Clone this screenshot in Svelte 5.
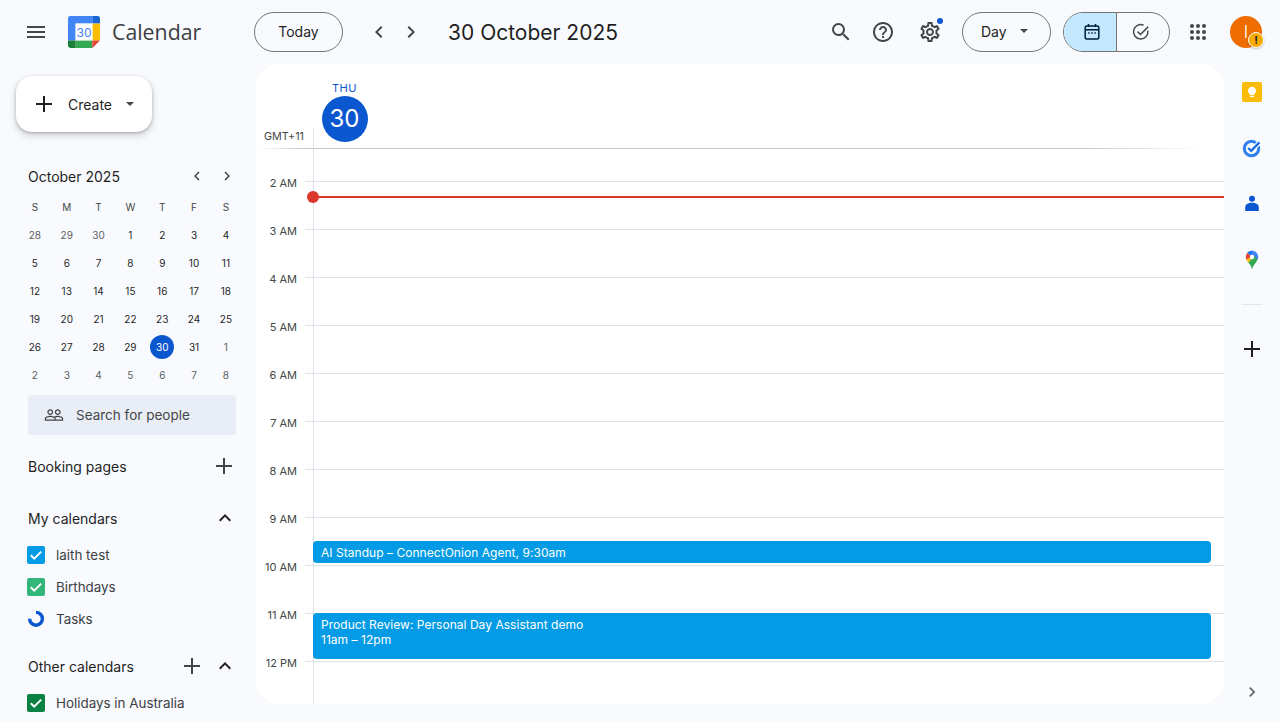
<script>
  const weekdays = ["S", "M", "T", "W", "T", "F", "S"];

  // Mini month grid, muted = outside October
  const miniDays = [
    ...[28, 29, 30].map((d) => ({ d, muted: true })),
    ...Array.from({ length: 31 }, (_, i) => ({ d: i + 1, muted: false })),
    ...[1, 2, 3, 4, 5, 6, 7, 8].map((d) => ({ d, muted: true })),
  ];

  const hours = ["2 AM", "3 AM", "4 AM", "5 AM", "6 AM", "7 AM", "8 AM", "9 AM", "10 AM", "11 AM", "12 PM"];
</script>

<div class="page">
  <header class="topbar">
    <div class="brand">
      <button class="icon-btn menu" aria-label="Main menu">
        <svg width="24" height="24" viewBox="0 0 24 24" fill="#444746"><path d="M3 18h18v-2H3v2zm0-5h18v-2H3v2zm0-7v2h18V6H3z" /></svg>
      </button>
      <div class="logo">
        <svg width="32" height="32" viewBox="0 0 32 32">
          <path d="M24.4 0H2.4A2.4 2.4 0 0 0 0 2.4V24.4h7.6V7.6h16.8z" fill="#4285f4" />
          <path d="M24.4 0v7.6H32V2.4A2.4 2.4 0 0 0 29.6 0z" fill="#1967d2" />
          <rect x="24.4" y="7.6" width="7.6" height="16.8" fill="#fbbc04" />
          <path d="M7.6 24.4h16.8V32H7.6z" fill="#34a853" />
          <path d="M0 24.4V29.6A2.4 2.4 0 0 0 2.4 32h5.2v-7.6z" fill="#188038" />
          <path d="M24.4 24.4V32L32 24.4z" fill="#ea4335" />
          <rect x="7.6" y="7.6" width="16.8" height="16.8" fill="#fff" />
        </svg>
        <span class="logo-num">30</span>
      </div>
      <span class="wordmark">Calendar</span>
    </div>

    <div class="nav">
      <button class="pill today">Today</button>
      <div class="arrows">
        <button class="icon-btn" aria-label="Previous day">
          <svg width="24" height="24" viewBox="0 0 24 24" fill="#444746"><path d="M15.41 7.41 14 6l-6 6 6 6 1.41-1.41L10.83 12z" /></svg>
        </button>
        <button class="icon-btn" aria-label="Next day">
          <svg width="24" height="24" viewBox="0 0 24 24" fill="#444746"><path d="M8.59 16.59 10 18l6-6-6-6-1.41 1.41L13.17 12z" /></svg>
        </button>
      </div>
      <h1 class="date-title">30 October 2025</h1>
    </div>

    <div class="tools">
      <button class="icon-btn" aria-label="Search">
        <svg width="24" height="24" viewBox="0 0 24 24" fill="#444746"><path d="M15.5 14h-.79l-.28-.27A6.471 6.471 0 0 0 16 9.5 6.5 6.5 0 1 0 9.5 16c1.61 0 3.09-.59 4.23-1.57l.27.28v.79l5 4.99L20.49 19l-4.99-5zm-6 0C7.01 14 5 11.99 5 9.5S7.01 5 9.5 5 14 7.01 14 9.5 11.99 14 9.5 14z" /></svg>
      </button>
      <button class="icon-btn" aria-label="Support">
        <svg width="24" height="24" viewBox="0 0 24 24" fill="#444746"><path d="M11 18h2v-2h-2v2zm1-16C6.48 2 2 6.48 2 12s4.48 10 10 10 10-4.48 10-10S17.52 2 12 2zm0 18c-4.41 0-8-3.59-8-8s3.59-8 8-8 8 3.59 8 8-3.59 8-8 8zm0-14c-2.21 0-4 1.79-4 4h2c0-1.1.9-2 2-2s2 .9 2 2c0 2-3 1.75-3 5h2c0-2.25 3-2.5 3-5 0-2.21-1.79-4-4-4z" /></svg>
      </button>
      <button class="icon-btn gear" aria-label="Settings">
        <svg width="24" height="24" viewBox="0 0 24 24" fill="#444746"><path d="M19.43 12.98c.04-.32.07-.64.07-.98 0-.34-.03-.66-.07-.98l2.11-1.65c.19-.15.24-.42.12-.64l-2-3.46c-.09-.16-.26-.25-.44-.25-.06 0-.12.01-.17.03l-2.49 1c-.52-.4-1.08-.73-1.69-.98l-.38-2.65C14.46 2.18 14.25 2 14 2h-4c-.25 0-.46.18-.49.42l-.38 2.65c-.61.25-1.17.59-1.69.98l-2.49-1c-.06-.02-.12-.03-.18-.03-.17 0-.34.09-.43.25l-2 3.46c-.13.22-.07.49.12.64l2.11 1.65c-.04.32-.07.65-.07.98 0 .33.03.66.07.98l-2.11 1.65c-.19.15-.24.42-.12.64l2 3.46c.09.16.26.25.44.25.06 0 .12-.01.17-.03l2.49-1c.52.4 1.08.73 1.69.98l.38 2.65c.03.24.24.42.49.42h4c.25 0 .46-.18.49-.42l.38-2.65c.61-.25 1.17-.59 1.69-.98l2.49 1c.06.02.12.03.18.03.17 0 .34-.09.43-.25l2-3.46c.12-.22.07-.49-.12-.64l-2.11-1.65zm-1.98-1.71c.04.31.05.52.05.73 0 .21-.02.43-.05.73l-.14 1.13.89.7 1.08.84-.7 1.21-1.27-.51-1.04-.42-.9.68c-.43.32-.84.56-1.25.73l-1.06.43-.16 1.13-.2 1.35h-1.4l-.19-1.35-.16-1.13-1.06-.43c-.43-.18-.83-.41-1.23-.71l-.91-.7-1.06.43-1.27.51-.7-1.21 1.08-.84.89-.7-.14-1.13c-.03-.31-.05-.54-.05-.74s.02-.43.05-.73l.14-1.13-.89-.7-1.08-.84.7-1.21 1.27.51 1.04.42.9-.68c.43-.32.84-.56 1.25-.73l1.06-.43.16-1.13.2-1.35h1.39l.19 1.35.16 1.13 1.06.43c.43.18.83.41 1.23.71l.91.7 1.06-.43 1.27-.51.7 1.21-1.07.85-.89.7.14 1.13zM12 8c-2.21 0-4 1.79-4 4s1.79 4 4 4 4-1.79 4-4-1.79-4-4-4zm0 6c-1.1 0-2-.9-2-2s.9-2 2-2 2 .9 2 2-.9 2-2 2z" /></svg>
        <span class="gear-dot"></span>
      </button>
      <button class="pill view-select">
        Day
        <svg width="8" height="4" viewBox="0 0 10 5" fill="#444746"><path d="M0 0l5 5 5-5z" /></svg>
      </button>
      <div class="toggle">
        <button class="toggle-part active" aria-label="Calendar">
          <svg width="20" height="20" viewBox="0 0 20 20" fill="none" stroke="#001d35" stroke-width="1.5">
            <rect x="3.2" y="4" width="13.6" height="13" rx="1.5" />
            <path d="M3.2 7.8h13.6M6.5 2v3M13.5 2v3" />
            <path d="M6.2 11h1.4M9.3 11h1.4M12.4 11h1.4" stroke-width="1.4" />
          </svg>
        </button>
        <button class="toggle-part second" aria-label="Tasks">
          <svg width="20" height="20" viewBox="0 0 20 20" fill="none" stroke="#444746" stroke-width="1.5">
            <path d="M16.8 8.6A7.2 7.2 0 1 1 12.6 3.2" />
            <path d="M6.6 9.6l2.9 2.9 7.6-7.6" />
          </svg>
        </button>
      </div>
      <button class="icon-btn apps" aria-label="Google apps">
        <svg width="24" height="24" viewBox="0 0 24 24" fill="#444746">
          <circle cx="6" cy="6" r="2" /><circle cx="12" cy="6" r="2" /><circle cx="18" cy="6" r="2" />
          <circle cx="6" cy="12" r="2" /><circle cx="12" cy="12" r="2" /><circle cx="18" cy="12" r="2" />
          <circle cx="6" cy="18" r="2" /><circle cx="12" cy="18" r="2" /><circle cx="18" cy="18" r="2" />
        </svg>
      </button>
      <div class="avatar">
        I
        <span class="avatar-badge">!</span>
      </div>
    </div>
  </header>

  <div class="body">
    <aside class="sidebar">
      <button class="create">
        <svg width="24" height="24" viewBox="0 0 24 24" fill="#1f1f1f"><path d="M20 13h-7v7h-2v-7H4v-2h7V4h2v7h7z" /></svg>
        <span>Create</span>
        <svg width="8" height="4" viewBox="0 0 10 5" fill="#444746"><path d="M0 0l5 5 5-5z" /></svg>
      </button>

      <div class="mini">
        <div class="mini-head">
          <span>October 2025</span>
          <div class="mini-arrows">
            <svg width="18" height="18" viewBox="0 0 24 24" fill="#444746"><path d="M15.41 7.41 14 6l-6 6 6 6 1.41-1.41L10.83 12z" /></svg>
            <svg width="18" height="18" viewBox="0 0 24 24" fill="#444746"><path d="M8.59 16.59 10 18l6-6-6-6-1.41 1.41L13.17 12z" /></svg>
          </div>
        </div>
        <div class="mini-grid">
          {#each weekdays as w}
            <span class="wd">{w}</span>
          {/each}
          {#each miniDays as day}
            <span class="cell" class:muted={day.muted}>
              <span class:today-mark={!day.muted && day.d === 30}>{day.d}</span>
            </span>
          {/each}
        </div>
      </div>

      <div class="people">
        <svg width="20" height="20" viewBox="0 0 24 24" fill="#444746"><path d="M16.5 13c-1.2 0-3.07.34-4.5 1-1.43-.67-3.3-1-4.5-1C5.33 13 1 14.08 1 16.25V19h22v-2.75c0-2.17-4.33-3.25-6.5-3.25zm-4 4.5h-10v-1.25c0-.54 2.56-1.75 5-1.75s5 1.21 5 1.75v1.25zm9 0H14v-1.25c0-.46-.2-.86-.52-1.22.88-.3 1.96-.53 3.02-.53 2.44 0 5 1.21 5 1.75v1.25zM7.5 12c1.93 0 3.5-1.57 3.5-3.5S9.43 5 7.5 5 4 6.57 4 8.5 5.57 12 7.5 12zm0-5.5c1.1 0 2 .9 2 2s-.9 2-2 2-2-.9-2-2 .9-2 2-2zm9 5.5c1.93 0 3.5-1.57 3.5-3.5S18.43 5 16.5 5 13 6.57 13 8.5s1.57 3.5 3.5 3.5zm0-5.5c1.1 0 2 .9 2 2s-.9 2-2 2-2-.9-2-2 .9-2 2-2z" /></svg>
        <span>Search for people</span>
      </div>

      <div class="section-row booking">
        <span>Booking pages</span>
        <svg width="24" height="24" viewBox="0 0 24 24" fill="#444746"><path d="M20 13h-7v7h-2v-7H4v-2h7V4h2v7h7z" /></svg>
      </div>

      <div class="section-row mine">
        <span>My calendars</span>
        <svg class="chev" width="24" height="24" viewBox="0 0 24 24" fill="#1f1f1f"><path d="M7.41 15.41 12 10.83l4.59 4.58L18 14l-6-6-6 6z" /></svg>
      </div>
      <ul class="cal-list">
        <li>
          <span class="check blue"><svg width="18" height="18" viewBox="0 0 18 18" fill="none" stroke="#fff" stroke-width="2"><path d="M3.8 9.2l3.4 3.4 7-7" /></svg></span>
          laith test
        </li>
        <li>
          <span class="check green"><svg width="18" height="18" viewBox="0 0 18 18" fill="none" stroke="#fff" stroke-width="2"><path d="M3.8 9.2l3.4 3.4 7-7" /></svg></span>
          Birthdays
        </li>
        <li>
          <span class="task-ring">
            <svg width="18" height="18" viewBox="0 0 18 18" fill="none" stroke="#0b57d0" stroke-width="3.4"><path d="M9 2.4a6.4 6.4 0 1 1-6.4 6.4" /></svg>
          </span>
          Tasks
        </li>
      </ul>

      <div class="section-row other">
        <span>Other calendars</span>
        <div class="row-icons">
          <svg width="24" height="24" viewBox="0 0 24 24" fill="#444746"><path d="M20 13h-7v7h-2v-7H4v-2h7V4h2v7h7z" /></svg>
          <svg class="chev" width="24" height="24" viewBox="0 0 24 24" fill="#1f1f1f"><path d="M7.41 15.41 12 10.83l4.59 4.58L18 14l-6-6-6 6z" /></svg>
        </div>
      </div>
      <ul class="cal-list">
        <li>
          <span class="check dark"><svg width="18" height="18" viewBox="0 0 18 18" fill="none" stroke="#fff" stroke-width="2"><path d="M3.8 9.2l3.4 3.4 7-7" /></svg></span>
          Holidays in Australia
        </li>
      </ul>
    </aside>

    <main class="card">
      <div class="day-head">
        <div class="gmt">GMT+11</div>
        <div class="day-label">
          <span class="dow">THU</span>
          <span class="dom">30</span>
        </div>
      </div>
      <div class="grid">
        <div class="gutter">
          {#each hours as h}
            <div class="hour-label"><span>{h}</span></div>
          {/each}
        </div>
        <div class="day-col">
          <div class="lead"></div>
          {#each hours as h}
            <div class="slot"></div>
          {/each}

          <div class="now"><span class="now-dot"></span></div>

          <div class="event standup">
            AI Standup – ConnectOnion Agent, 9:30am
          </div>
          <div class="event review">
            <div>Product Review: Personal Day Assistant demo</div>
            <div>11am – 12pm</div>
          </div>
        </div>
      </div>
    </main>

    <nav class="rail">
      <div class="rail-item">
        <svg width="20" height="20" viewBox="0 0 20 20">
          <rect width="20" height="20" rx="2" fill="#fbbc04" />
          <path d="M10 4.8a4 4 0 0 0-2.2 7.3v1h4.4v-1A4 4 0 0 0 10 4.8z" fill="#fff" />
          <rect x="8" y="13.8" width="4" height="1.3" fill="#fff" />
        </svg>
      </div>
      <div class="rail-item">
        <svg width="20" height="20" viewBox="0 0 20 20" fill="none">
          <circle cx="9.5" cy="10.5" r="7.2" stroke="#2f7ff0" stroke-width="3" />
          <path d="M6.2 10l3 2.9 8.2-8.5" stroke="#fff" stroke-width="4.6" />
          <path d="M6.2 10l3 2.9 8.2-8.5" stroke="#1a6ce8" stroke-width="2.4" />
        </svg>
      </div>
      <div class="rail-item">
        <svg width="20" height="20" viewBox="0 0 20 20" fill="#0b57d0">
          <circle cx="10" cy="4.8" r="3" />
          <path d="M3.2 17v-3.200c0-3.200 2.600-5 6.800-5s6.800 1.800 6.800 5V17z" />
        </svg>
      </div>
      <div class="rail-item">
        <svg width="20" height="20" viewBox="0 0 20 20">
          <path d="M10 .8c3.600 0 6.200 2.800 6.200 6.200 0 1.100-.3 2-.8 2.900L10 6z" fill="#4285f4" />
          <path d="M10 .8C8 .8 6.300 1.700 5.200 3L10 7z" fill="#1a73e8" />
          <path d="M5.200 3A6.200 6.200 0 0 0 3.800 7c0 .9.200 1.700.5 2.500L10 7z" fill="#ea4335" />
          <path d="M4.300 9.500c.5 1.100 1.200 2 2 3L13 6 10 7z" fill="#fbbc04" />
          <path d="M6.300 12.500c1.300 1.700 3 3.400 3.700 6.700.8-3.500 3.500-5.800 5.400-9.300L13 6z" fill="#34a853" />
          <circle cx="10" cy="7" r="2.200" fill="#fff" />
        </svg>
      </div>
      <div class="rail-sep"></div>
      <div class="rail-item plus">
        <svg width="24" height="24" viewBox="0 0 24 24" fill="#1f1f1f"><path d="M20 13h-7v7h-2v-7H4v-2h7V4h2v7h7z" /></svg>
      </div>
      <div class="rail-end">
        <svg width="20" height="20" viewBox="0 0 24 24" fill="#5f6368"><path d="M8.59 16.59 10 18l6-6-6-6-1.41 1.41L13.17 12z" /></svg>
      </div>
    </nav>
  </div>
</div>

<style>
  :global(body) {
    margin: 0;
    background: #f8fafd;
  }

  .page {
    height: 721px;
    display: flex;
    flex-direction: column;
    overflow: hidden;
    background: #f8fafd;
    color: #1f1f1f;
    font-family: "Inter", "Liberation Sans", sans-serif;
  }

  button {
    font-family: inherit;
    color: inherit;
    background: none;
    border: none;
    padding: 0;
  }

  .topbar {
    height: 64px;
    flex-shrink: 0;
    display: flex;
    align-items: center;
  }

  .brand {
    width: 254px;
    display: flex;
    align-items: center;
    flex-shrink: 0;
  }

  .icon-btn {
    width: 32px;
    height: 40px;
    display: flex;
    align-items: center;
    justify-content: center;
  }

  .menu {
    margin-left: 20px;
    margin-right: 16px;
  }

  .logo {
    width: 32px;
    height: 32px;
    position: relative;
  }

  .logo svg {
    display: block;
  }

  .logo-num {
    position: absolute;
    inset: 0;
    display: flex;
    align-items: center;
    justify-content: center;
    font-size: 12px;
    color: #4285f4;
  }

  .wordmark {
    margin-left: 12px;
    font-size: 21.3px;
    line-height: 28px;
    color: #3c4043;
    font-family: "Open Sans", sans-serif;
  }

  .nav {
    display: flex;
    align-items: center;
    flex: 1;
  }

  .pill {
    height: 40px;
    box-sizing: border-box;
    padding-bottom: 2px;
    border: 1px solid #747775;
    border-radius: 20px;
    font-size: 14px;
    display: flex;
    align-items: center;
    justify-content: center;
  }

  .today {
    width: 89px;
  }

  .arrows {
    display: flex;
    margin-left: 20px;
  }

  .date-title {
    margin: 0 0 0 21px;
    font-size: 21px;
    font-weight: 400;
    color: #1f1f1f;
  }

  .tools {
    display: flex;
    align-items: center;
  }

  .tools > .icon-btn {
    width: 42px;
  }

  .tools > .gear {
    width: 46px;
    position: relative;
    margin-left: 3px;
  }

  .gear-dot {
    position: absolute;
    top: 6px;
    right: 10px;
    width: 6px;
    height: 6px;
    border-radius: 50%;
    background: #0b57d0;
  }

  .view-select {
    width: 89px;
    margin-left: 9px;
    padding-left: 18px;
    justify-content: flex-start;
    gap: 13px;
  }

  .toggle {
    display: flex;
    width: 107px;
    height: 40px;
    box-sizing: border-box;
    margin-left: 12px;
    border: 1px solid #747775;
    border-radius: 20px;
    overflow: hidden;
  }

  .toggle-part {
    flex: 1;
    display: flex;
    align-items: center;
    justify-content: center;
  }

  .toggle-part.active {
    background: #c2e7ff;
    border-right: 1px solid #747775;
    padding-left: 4px;
  }

  .toggle-part.second {
    padding-right: 4px;
  }

  .tools > .apps {
    width: 32px;
    margin-left: 12px;
  }

  .avatar {
    position: relative;
    width: 32px;
    height: 32px;
    margin-left: 16px;
    margin-right: 18px;
    border-radius: 50%;
    background: #ef6c00;
    color: #fff;
    font-size: 17px;
    font-weight: 300;
    display: flex;
    align-items: center;
    justify-content: center;
  }

  .avatar-badge {
    position: absolute;
    right: -2px;
    bottom: 0;
    width: 14px;
    height: 14px;
    border: 1px solid #fff;
    border-radius: 50%;
    background: #f9ab00;
    color: #1f1f1f;
    font-size: 11px;
    font-weight: 700;
    line-height: 14px;
    text-align: center;
    box-shadow: 0 1px 2px rgba(60, 64, 67, 0.3);
  }

  .body {
    flex: 1;
    display: flex;
    min-height: 0;
  }

  .sidebar {
    width: 256px;
    flex-shrink: 0;
    overflow: hidden;
    box-sizing: border-box;
    padding-top: 12px;
  }

  .create {
    margin-left: 16px;
    width: 136px;
    height: 56px;
    display: flex;
    align-items: center;
    padding-left: 16px;
    box-sizing: border-box;
    background: #fff;
    border-radius: 16px;
    box-shadow: 0 1px 3px rgba(60, 64, 67, 0.35), 0 4px 6px 1px rgba(60, 64, 67, 0.15);
    font-size: 14px;
  }

  .create span {
    margin-left: 12px;
    margin-right: 14px;
  }

  .mini {
    margin-top: 28px;
  }

  .mini-head {
    height: 32px;
    display: flex;
    align-items: center;
    justify-content: space-between;
    padding: 0 20px 0 28px;
    font-size: 14px;
  }

  .mini-arrows {
    display: flex;
    gap: 12px;
  }

  .mini-arrows svg {
    display: block;
  }

  .mini-grid {
    display: grid;
    grid-template-columns: repeat(7, 31.83px);
    grid-auto-rows: 28px;
    padding-left: 19px;
    margin-top: 1px;
    font-size: 10px;
  }

  .wd,
  .cell {
    display: flex;
    align-items: center;
    justify-content: center;
  }

  .wd {
    color: #444746;
  }

  .muted {
    color: #5b5e5f;
  }

  .today-mark {
    width: 24px;
    height: 24px;
    border-radius: 50%;
    background: #0b57d0;
    color: #fff;
    display: flex;
    align-items: center;
    justify-content: center;
  }

  .people {
    margin: 6px 20px 0 28px;
    height: 40px;
    display: flex;
    align-items: center;
    padding-left: 16px;
    gap: 12px;
    background: #e9eef6;
    border-radius: 4px;
    font-size: 13.5px;
    color: #444746;
  }

  .section-row {
    height: 32px;
    display: flex;
    align-items: center;
    justify-content: space-between;
    padding: 0 20px 0 28px;
    font-size: 14px;
  }

  .chev {
    margin-right: -1px;
  }

  .row-icons {
    display: flex;
    gap: 9px;
  }

  .booking {
    margin-top: 15px;
  }

  .mine {
    margin-top: 20px;
  }

  .other {
    margin-top: 15px;
  }

  .cal-list {
    list-style: none;
    margin: 5px 0 0;
    padding: 0 0 0 27px;
    font-size: 13.4px;
    color: #3c4043;
  }

  .cal-list li {
    height: 32px;
    display: flex;
    align-items: center;
    gap: 11px;
  }

  .check,
  .task-ring {
    width: 18px;
    height: 18px;
    flex-shrink: 0;
    border-radius: 2px;
    display: flex;
  }

  .check.blue {
    background: #039be5;
  }

  .check.green {
    background: #33b679;
  }

  .check.dark {
    background: #0b8043;
  }

  .card {
    width: 968px;
    height: 640px;
    flex-shrink: 0;
    display: flex;
    flex-direction: column;
    background: #fff;
    border-radius: 24px;
    overflow: hidden;
  }

  .day-head {
    height: 85px;
    flex-shrink: 0;
    display: flex;
    box-sizing: border-box;
    background: linear-gradient(to right, transparent, #c4c7c5 5%, #c4c7c5 85%, transparent 98%) bottom / 100% 1px no-repeat;
  }

  .gmt {
    width: 58px;
    height: 21px;
    box-sizing: border-box;
    padding: 2px 0 0 8px;
    align-self: flex-end;
    border-right: 1px solid #dde3ea;
    font-size: 10.8px;
    line-height: 14px;
    color: #444746;
    white-space: nowrap;
  }

  .day-label {
    width: 46px;
    margin-left: 7.5px;
    padding-top: 17px;
    display: flex;
    flex-direction: column;
    align-items: center;
  }

  .dow {
    font-size: 11px;
    line-height: 14px;
    letter-spacing: 0.5px;
    color: #0b57d0;
  }

  .dom {
    width: 46px;
    height: 46px;
    margin-top: 1px;
    border-radius: 50%;
    background: #0b57d0;
    color: #fff;
    font-size: 24px;
    line-height: 46px;
    text-align: center;
  }

  .grid {
    flex: 1;
    display: flex;
    min-height: 0;
    overflow: hidden;
  }

  .gutter {
    width: 57px;
    flex-shrink: 0;
    padding-top: 32px;
    font-size: 11px;
    color: #444746;
  }

  .hour-label {
    height: 48px;
    display: flex;
    background: linear-gradient(#dde3ea, #dde3ea) 49px 0 / 8px 1px no-repeat;
  }

  .hour-label span {
    width: 41px;
    text-align: right;
    line-height: 14px;
    margin-top: -5px;
  }

  .day-col {
    position: relative;
    flex: 1;
    border-left: 1px solid #dde3ea;
  }

  .lead {
    height: 32px;
  }

  .slot {
    height: 48px;
    box-sizing: border-box;
    border-top: 1px solid #dde3ea;
  }

  .now {
    position: absolute;
    left: -1px;
    right: 0;
    top: 47px;
    height: 2px;
    background: #db372d;
  }

  .now-dot {
    position: absolute;
    left: -6px;
    top: -5px;
    width: 12px;
    height: 12px;
    border-radius: 50%;
    background: #db372d;
  }

  .event {
    position: absolute;
    left: -1px;
    width: 898px;
    box-sizing: border-box;
    padding: 0 8px;
    border-radius: 4px;
    background: #039be5;
    color: #fff;
    font-size: 12px;
    letter-spacing: 0.04px;
    line-height: 15px;
    white-space: nowrap;
  }

  .standup {
    top: 392px;
    height: 22px;
    line-height: 23px;
  }

  .review {
    top: 464px;
    height: 46px;
    padding-top: 4px;
  }

  .rail {
    width: 56px;
    flex-shrink: 0;
    display: flex;
    flex-direction: column;
    align-items: center;
  }

  .rail-item {
    height: 56px;
    display: flex;
    align-items: center;
    justify-content: center;
  }

  .rail-sep {
    width: 20px;
    height: 1px;
    margin-top: 16px;
    background: #e3e7ec;
  }

  .rail-item.plus {
    height: 24px;
    margin-top: 32px;
  }

  .rail-end {
    margin-top: auto;
    margin-bottom: 19px;
    display: flex;
  }
</style>
